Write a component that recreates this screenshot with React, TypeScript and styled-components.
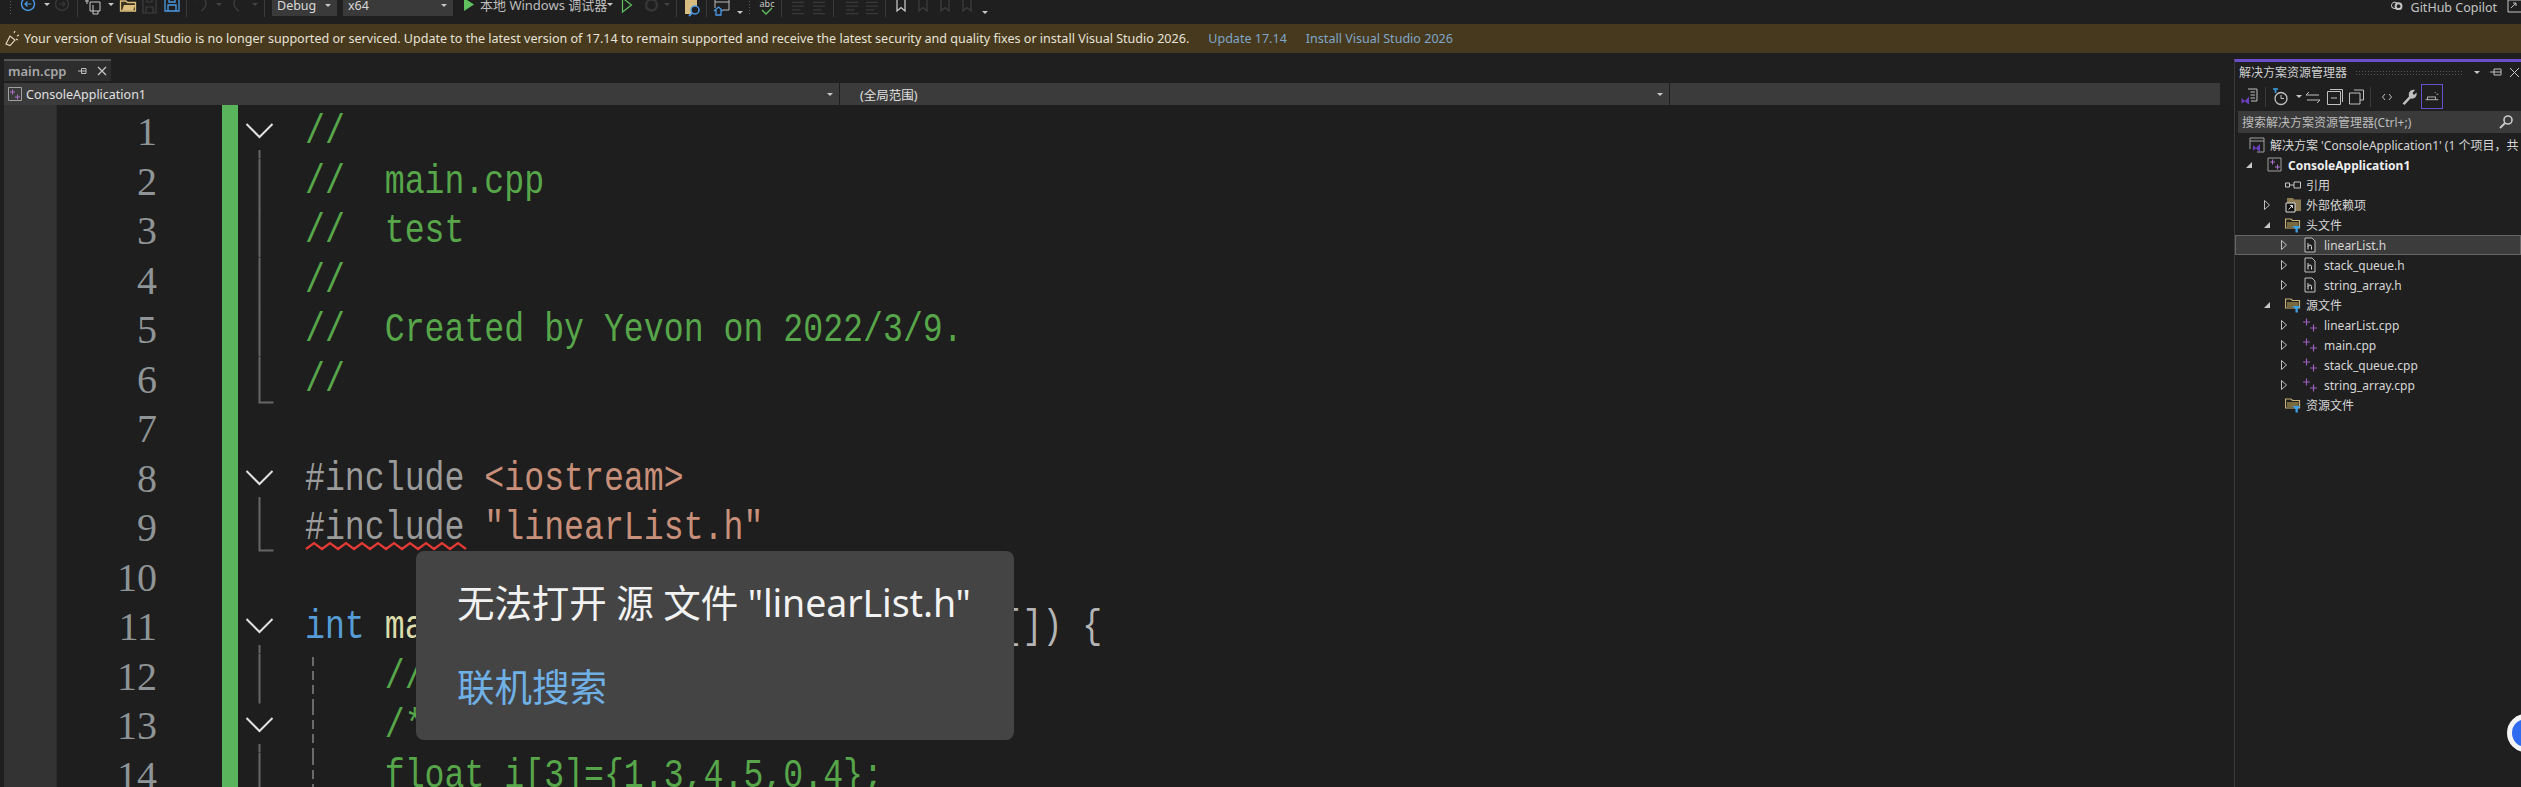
import React from 'react'
import styled, { createGlobalStyle } from 'styled-components'

const GlobalStyle = createGlobalStyle`
  html, body { margin: 0; padding: 0; background: #1f1f1f; overflow: hidden; }
  #root { width: 2521px; height: 787px; }
`

const UI_FONT = `"Noto Sans", "Noto Sans CJK SC", sans-serif`

const tokenColors = {
  comment: '#57a64a',
  pre: '#9b9b9b',
  str: '#c8907a',
  key: '#569cd6',
  fn: '#dcdcaa',
  punct: '#b4b4b4',
  id: '#9cdcfe',
}

const Page = styled.div`
  position: relative;
  width: 2521px;
  height: 787px;
  overflow: hidden;
  display: flex;
  flex-direction: column;
  background: #1f1f1f;
  color: #dcdcdc;
  font-family: ${UI_FONT};
`

/* ---------- top toolbar ---------- */
const Toolbar = styled.div`
  height: 24px;
  flex: none;
  display: flex;
  align-items: flex-start;
  overflow: hidden;
`
const ToolIcon = styled.svg<{ $w?: number; $gap?: number }>`
  flex: none;
  width: ${p => p.$w ?? 16}px;
  height: 18px;
  margin-left: ${p => p.$gap ?? 0}px;
  overflow: visible;
`
const Sep = styled.div<{ $gap: number }>`
  flex: none;
  width: 1px;
  height: 17px;
  background: #3a3a3a;
  margin-left: ${p => p.$gap}px;
`
const Dots = styled.div<{ $gap: number }>`
  flex: none;
  width: 4px;
  height: 15px;
  margin-left: ${p => p.$gap}px;
  background-image: radial-gradient(#5c5c5c 0.7px, transparent 0.8px);
  background-size: 3px 3px;
`
const Combo = styled.div<{ $w: number; $gap: number }>`
  flex: none;
  width: ${p => p.$w}px;
  height: 16px;
  margin-left: ${p => p.$gap}px;
  background: #3a3a3a;
  display: flex;
  align-items: flex-start;
  justify-content: space-between;
  box-sizing: border-box;
  padding: 0 6px 0 5px;
  font-size: 12.5px;
  line-height: 11px;
  color: #d8d8d8;
`
const Arrow = styled.span<{ $gap?: number; $top?: number; $dim?: boolean }>`
  flex: none;
  width: 0;
  height: 0;
  margin-left: ${p => p.$gap ?? 0}px;
  margin-top: ${p => p.$top ?? 0}px;
  border-left: 3px solid transparent;
  border-right: 3px solid transparent;
  border-top: 3px solid ${p => (p.$dim ? '#444' : '#c8c8c8')};
`
const RunLabel = styled.span`
  flex: none;
  width: 124px;
  margin-left: 5px;
  font-size: 13px;
  line-height: 10px;
  color: #bdbdbd;
  white-space: nowrap;
`
const SpellBox = styled.div`
  flex: none;
  width: 18px;
  margin-left: 6px;
  display: flex;
  flex-direction: column;
  align-items: center;
  font-size: 9px;
  line-height: 7px;
  color: #c8c8c8;
`
const CopilotBox = styled.div`
  margin-left: auto;
  margin-right: -2px;
  display: flex;
  align-items: center;
  font-size: 12.5px;
  line-height: 11px;
  color: #c4c4c4;
`
const CopilotLabel = styled.span`
  margin: 0 10px 0 6px;
`

/* ---------- info bar ---------- */
const InfoBar = styled.div`
  height: 29px;
  flex: none;
  background: #47391d;
  display: flex;
  align-items: center;
  padding-left: 4px;
  font-size: 12.55px;
  color: #e6e2d8;
  white-space: nowrap;
`
const InfoText = styled.span`
  margin-left: 4px;
`
const InfoLink = styled.span`
  margin-left: 19px;
  color: #7fa6c9;
`

/* ---------- editor ---------- */
const Body = styled.div`
  flex: 1;
  min-height: 0;
  display: flex;
`
const EditorPane = styled.div`
  flex: none;
  width: 2234px;
  display: flex;
  flex-direction: column;
  padding-top: 6px;
  box-sizing: border-box;
`
const TabStrip = styled.div`
  height: 24px;
  flex: none;
  padding-left: 4px;
  display: flex;
`
const Tab = styled.div`
  width: 107px;
  height: 22px;
  box-sizing: border-box;
  background: #2d2d2d;
  border-top: 2px solid #555;
  display: flex;
  align-items: center;
  padding-left: 4px;
  font-size: 13px;
  font-weight: 600;
  color: #a8a8a8;
`
const TabIcons = styled.span`
  margin-left: 12px;
  display: flex;
  align-items: center;
  gap: 9px;
`
const NavBar = styled.div`
  height: 22px;
  flex: none;
  margin: 0 13px 0 4px;
  background: #3b3b3b;
  display: flex;
  font-size: 12.5px;
  color: #e0e0e0;
`
const NavCell = styled.div<{ $w: number; $pad?: number }>`
  flex: none;
  width: ${p => p.$w}px;
  box-sizing: border-box;
  padding: 0 6px 0 ${p => p.$pad ?? 4}px;
  display: flex;
  align-items: center;
  border-right: 1px solid #1f1f1f;
  gap: 3px;
`
const NavArrow = styled(Arrow)`
  margin-left: auto;
`
const CodeArea = styled.div`
  flex: 1;
  min-height: 0;
  background: #1e1e1e;
  display: flex;
  padding-left: 4px;
  overflow: hidden;
`
const LeftMargin = styled.div`
  flex: none;
  width: 53px;
  background: #333;
  border-right: 1px solid #2c2c2c;
  box-sizing: border-box;
`
/* the green change bar runs the full height, also above the first row */
const Lines = styled.div`
  flex: 1;
  padding-top: 4px;
  display: flex;
  flex-direction: column;
  background: linear-gradient(#59b45c, #59b45c) 165px 0 / 16px 100% no-repeat;
`
const Row = styled.div`
  flex: none;
  height: 49.5px;
  display: flex;
`
const LineNo = styled.div`
  flex: none;
  width: 100px;
  margin-right: 81px;
  text-align: right;
  font: 40px/45.5px "Liberation Serif", serif;
  color: #8f9496;
`
const FoldCell = styled.div`
  flex: none;
  width: 68px;
  position: relative;
`
const FoldSvg = styled.svg`
  position: absolute;
  left: 0;
  top: 0;
  width: 68px;
  height: 50px;
  overflow: visible;
`
const CodeCell = styled.div<{ $guide?: boolean }>`
  flex: 1;
  position: relative;
  white-space: pre;
  ${p =>
    p.$guide
      ? `&::before {
    content: '';
    position: absolute;
    left: 6px;
    top: 3px;
    bottom: -3px;
    width: 2px;
    background: repeating-linear-gradient(to bottom, #6a6a6a 0 9px, transparent 9px 14px);
  }`
      : ''}
`
const CodeText = styled.div`
  display: inline-block;
  margin-left: -1px;
  font: 41px/46px "Liberation Mono", monospace;
  transform: scaleX(0.81);
  transform-origin: left center;
`
const Tok = styled.span<{ $k: keyof typeof tokenColors }>`
  color: ${p => tokenColors[p.$k]};
`
const Squiggle = styled.svg`
  position: absolute;
  left: 0;
  top: 37px;
  width: 158px;
  height: 9px;
  overflow: visible;
`

/* ---------- popup ---------- */
const Popup = styled.div`
  position: absolute;
  left: 416px;
  top: 551px;
  width: 598px;
  height: 189px;
  box-sizing: border-box;
  padding: 30px 0 0 41px;
  background: #444444;
  border-radius: 8px;
`
const PopupTitle = styled.div`
  font-size: 37.5px;
  line-height: 44px;
  letter-spacing: -0.1px;
  color: #f2f2f2;
  white-space: nowrap;
`
const PopupLink = styled.div`
  margin-top: 40px;
  font-size: 37.5px;
  line-height: 44px;
  color: #6fb0e6;
`
const FloatBall = styled.div`
  position: absolute;
  left: 2507px;
  top: 714px;
  width: 38px;
  height: 38px;
  border-radius: 50%;
  background: #2f6bf0;
  border: 5px solid #f4f4f4;
  box-sizing: border-box;
`

/* ---------- solution explorer ---------- */
const Explorer = styled.div`
  flex: 1;
  margin-top: 6px;
  border-left: 1px solid #3a3a3a;
  border-top: 3px solid #6a50c8;
  display: flex;
  flex-direction: column;
  min-width: 0;
`
const PanelTitle = styled.div`
  height: 20px;
  flex: none;
  display: flex;
  align-items: center;
  padding: 0 2px 0 4px;
  font-size: 12px;
  color: #d0d0d0;
  white-space: nowrap;
`
const Grip = styled.div`
  flex: 1;
  height: 5px;
  margin: 0 12px 0 8px;
  background-image: radial-gradient(#5a5a5a 0.7px, transparent 0.8px);
  background-size: 3px 3px;
`
const PanelTools = styled.div`
  height: 29px;
  flex: none;
  display: flex;
  align-items: center;
`
const PanelSep = styled(Sep)`
  height: 20px;
`
const ActiveTool = styled.svg`
  flex: none;
  width: 22px;
  height: 25px;
  margin-left: 4px;
  box-sizing: border-box;
  border: 1px solid #6a50c8;
`
const SearchBox = styled.div`
  height: 22px;
  flex: none;
  margin-left: 3px;
  background: #3a3a3a;
  display: flex;
  align-items: center;
  padding-left: 4px;
  font-size: 12px;
  color: #bdbdbd;
  white-space: nowrap;
  justify-content: space-between;
  overflow: hidden;
`
const Tree = styled.div`
  margin-top: 2px;
  display: flex;
  flex-direction: column;
`
const TreeRow = styled.div<{ $pad: number; $selected?: boolean; $bold?: boolean }>`
  height: 20px;
  flex: none;
  box-sizing: border-box;
  display: flex;
  align-items: center;
  padding-left: ${p => p.$pad}px;
  font-size: 12px;
  font-weight: ${p => (p.$bold ? 700 : 400)};
  color: ${p => (p.$bold ? '#efefef' : '#d6d6d6')};
  white-space: nowrap;
  overflow: hidden;
  ${p => (p.$selected ? 'background: #3c3c3c; box-shadow: inset 0 0 0 1px #666;' : '')}
`
const Twisty = styled.svg`
  flex: none;
  width: 10px;
  height: 10px;
  margin-right: 13px;
`
const NodeIcon = styled.svg`
  flex: none;
  width: 16px;
  height: 16px;
  margin-right: 5px;
`

type TokenDef = [keyof typeof tokenColors, string]
type CodeLine = {
  n: number
  fold?: 'open' | 'line' | 'end'
  guide?: boolean
  squiggle?: boolean
  toks: TokenDef[]
}

const CODE: CodeLine[] = [
  { n: 1, fold: 'open', toks: [['comment', '//']] },
  { n: 2, fold: 'line', toks: [['comment', '//  main.cpp']] },
  { n: 3, fold: 'line', toks: [['comment', '//  test']] },
  { n: 4, fold: 'line', toks: [['comment', '//']] },
  { n: 5, fold: 'line', toks: [['comment', '//  Created by Yevon on 2022/3/9.']] },
  { n: 6, fold: 'end', toks: [['comment', '//']] },
  { n: 7, toks: [] },
  { n: 8, fold: 'open', toks: [['pre', '#include '], ['str', '<iostream>']] },
  { n: 9, fold: 'end', squiggle: true, toks: [['pre', '#include '], ['str', '"linearList.h"']] },
  { n: 10, toks: [] },
  {
    n: 11,
    fold: 'open',
    toks: [
      ['key', 'int '],
      ['fn', 'main'],
      ['punct', '('],
      ['key', 'int '],
      ['id', 'argc'],
      ['punct', ', '],
      ['key', 'const char'],
      ['punct', '* '],
      ['id', 'argv'],
      ['punct', '[]) {'],
    ],
  },
  { n: 12, fold: 'line', guide: true, toks: [['comment', '    //']] },
  { n: 13, fold: 'open', guide: true, toks: [['comment', '    /*']] },
  { n: 14, fold: 'line', guide: true, toks: [['comment', '    float i[3]={1.3,4.5,0.4};']] },
]

function Fold({ kind }: { kind?: CodeLine['fold'] }) {
  return (
    <FoldCell>
      <FoldSvg viewBox="0 0 68 50">
        {kind === 'open' && (
          <>
            <path d="M8.5 15 L21.5 28 L34.5 15" fill="none" stroke="#e2e2e2" strokeWidth="2" />
            <path d="M21.5 41 V49.5" stroke="#666" strokeWidth="2" />
          </>
        )}
        {kind === 'line' && <path d="M21.5 0 V49.5" stroke="#666" strokeWidth="2" />}
        {kind === 'end' && <path d="M21.5 0 V45.5 H35.5" fill="none" stroke="#666" strokeWidth="2" />}
      </FoldSvg>
    </FoldCell>
  )
}

function wavePath() {
  let d = 'M0 7'
  for (let x = 0; x < 157; x += 16) d += ` L${x + 8} 1 L${x + 16} 7`
  return d
}

const ChevronRight = () => (
  <Twisty viewBox="0 0 10 10">
    <path d="M2.5 0.5 L7.5 5 L2.5 9.5 Z" fill="none" stroke="#c0c0c0" strokeWidth="1" />
  </Twisty>
)
const ChevronOpen = () => (
  <Twisty viewBox="0 0 10 10">
    <path d="M8 2 V8 H2 Z" fill="#c8c8c8" />
  </Twisty>
)
const FolderIcon = () => (
  <NodeIcon viewBox="0 0 16 16">
    <path d="M0.5 2 H6 L7.5 3.5 H14.5 V11 H0.5 Z" fill="none" stroke="#c8b078" strokeWidth="1.2" />
    <path d="M2 5 H13.5 V10 H2 Z" fill="#7a6a42" />
    <path d="M7.5 9 H15.5 L12.8 12 V15.5 H10.5 V12 Z" fill="#3aa0e8" />
  </NodeIcon>
)
const HeaderIcon = () => (
  <NodeIcon viewBox="0 0 16 16" style={{ marginRight: 6 }}>
    <path d="M3 1 H10 L13 4 V15 H3 Z" fill="#1f1f1f" stroke="#c0c0c0" />
    <path d="M6 6 V12.5 M6 9.5 Q6.5 8 8 8 Q9.5 8 9.5 9.5 V12.5" fill="none" stroke="#dcdcdc" />
  </NodeIcon>
)
const CppIcon = () => (
  <NodeIcon viewBox="0 0 16 16" style={{ marginRight: 6 }}>
    <path d="M1 5 H8 M4.5 1.5 V8.5 M8 11 H15 M11.5 7.5 V14.5" stroke="#9d5cc0" strokeWidth="1.2" />
  </NodeIcon>
)

type TreeItem = {
  label: string
  pad: number
  twisty?: 'open' | 'closed'
  icon: 'folder' | 'h' | 'cpp' | 'ref' | 'ext'
  selected?: boolean
}

const TREE: TreeItem[] = [
  { label: '引用', pad: 50, icon: 'ref' },
  { label: '外部依赖项', pad: 27, twisty: 'closed', icon: 'ext' },
  { label: '头文件', pad: 27, twisty: 'open', icon: 'folder' },
  { label: 'linearList.h', pad: 44, twisty: 'closed', icon: 'h', selected: true },
  { label: 'stack_queue.h', pad: 44, twisty: 'closed', icon: 'h' },
  { label: 'string_array.h', pad: 44, twisty: 'closed', icon: 'h' },
  { label: '源文件', pad: 27, twisty: 'open', icon: 'folder' },
  { label: 'linearList.cpp', pad: 44, twisty: 'closed', icon: 'cpp' },
  { label: 'main.cpp', pad: 44, twisty: 'closed', icon: 'cpp' },
  { label: 'stack_queue.cpp', pad: 44, twisty: 'closed', icon: 'cpp' },
  { label: 'string_array.cpp', pad: 44, twisty: 'closed', icon: 'cpp' },
  { label: '资源文件', pad: 50, icon: 'folder' },
]

function NodeGlyph({ icon }: { icon: TreeItem['icon'] }) {
  if (icon === 'folder') return <FolderIcon />
  if (icon === 'h') return <HeaderIcon />
  if (icon === 'cpp') return <CppIcon />
  if (icon === 'ref')
    return (
      <NodeIcon viewBox="0 0 16 16">
        <path d="M0.5 6 H4.5 V10 H0.5 Z M4.5 8 H9 M9 5 H15.5 V11 H9 Z" fill="none" stroke="#c8c8c8" />
      </NodeIcon>
    )
  return (
    <NodeIcon viewBox="0 0 16 16">
      <path d="M2 1 H8 L9 2.5 H16 V14 H2 Z" fill="#8a7a52" />
      <path d="M1 6 H10 V15 H1 Z" fill="#111" stroke="#ddd" />
      <path d="M3.5 12.5 L7.5 8.5 M5 8.5 H7.5 V11" fill="none" stroke="#ddd" />
    </NodeIcon>
  )
}

const DimBars = ({ gap }: { gap: number }) => (
  <ToolIcon viewBox="0 0 16 18" $w={15} $gap={gap}>
    <path d="M1 2 H14 M1 6 H14 M1 10 H10 M1 14 H14" stroke="#3a3a3a" strokeWidth="1.3" />
  </ToolIcon>
)
const Bookmark = ({ gap, bright }: { gap: number; bright?: boolean }) => (
  <ToolIcon viewBox="0 0 10 18" $w={10} $gap={gap}>
    <path d="M1 -2 V11 L5 7.5 L9 11 V-2" fill="none" stroke={bright ? '#d0d0d0' : '#3f3f3f'} strokeWidth="1.2" />
  </ToolIcon>
)

function TopToolbar() {
  return (
    <Toolbar>
      <Dots $gap={9} />
      <ToolIcon viewBox="0 0 16 18" $gap={7}>
        <circle cx="8" cy="4" r="6.5" fill="none" stroke="#4a9be8" strokeWidth="1.4" />
        <path d="M11.5 4 H5 M7.5 1.5 L5 4 L7.5 6.5" fill="none" stroke="#4a9be8" strokeWidth="1.2" />
      </ToolIcon>
      <Arrow $gap={8} $top={3} />
      <ToolIcon viewBox="0 0 16 18" $gap={4}>
        <circle cx="8" cy="4" r="6.5" fill="none" stroke="#383838" strokeWidth="1.4" />
        <path d="M4.5 4 H11 M8.5 1.5 L11 4 L8.5 6.5" fill="none" stroke="#383838" strokeWidth="1.2" />
      </ToolIcon>
      <Sep $gap={7} />
      <ToolIcon viewBox="0 0 16 18" $gap={8}>
        <path d="M4 2 H14 V11 H4 Z M7 5 V14 H12 V11 M1 -1 V4 M-1 1 H3" fill="none" stroke="#c8c8c8" />
      </ToolIcon>
      <Arrow $gap={6} $top={3} />
      <ToolIcon viewBox="0 0 16 18" $gap={6}>
        <path d="M0.5 1 H6 L7.5 2.5 H15.5 V11 H0.5 Z" fill="#3a3220" stroke="#dcc07e" strokeWidth="1.3" />
        <path d="M2 10.5 L4 5 H15.5 L13 10.5 Z" fill="#dcc07e" />
      </ToolIcon>
      <ToolIcon viewBox="0 0 16 18" $gap={6}>
        <path d="M1 -2 H14 V13 H1 Z M4 7 H11 V13 H4 Z M5 -2 H10 V2 H5 Z" fill="none" stroke="#3f3f3f" strokeWidth="1.2" />
      </ToolIcon>
      <ToolIcon viewBox="0 0 16 18" $gap={6}>
        <path d="M1 -2 H15 V11 H1 Z M4 5 H12 V11 H4 Z M5 -2 H11 V2 H5 Z" fill="none" stroke="#4a9be8" strokeWidth="1.3" />
      </ToolIcon>
      <Sep $gap={6} />
      <ToolIcon viewBox="0 0 14 18" $w={14} $gap={8}>
        <path d="M1 0 L7 -2 C13 0 12 7 6 11" fill="none" stroke="#3f3f3f" strokeWidth="1.3" />
      </ToolIcon>
      <Arrow $gap={7} $top={3} $dim />
      <ToolIcon viewBox="0 0 16 18" $gap={8}>
        <path d="M13 0 L8 -2 C2 0 3 7 9 11" fill="none" stroke="#3f3f3f" strokeWidth="1.3" />
      </ToolIcon>
      <Arrow $gap={6} $top={3} $dim />
      <Sep $gap={6} />
      <Combo $w={65} $gap={7}>
        Debug
        <Arrow $top={4} />
      </Combo>
      <Combo $w={110} $gap={6}>
        x64
        <Arrow $top={4} />
      </Combo>
      <ToolIcon viewBox="0 0 12 18" $w={12} $gap={10}>
        <path d="M1 -2 L11 4.5 L1 11 Z" fill="#5fc25f" />
      </ToolIcon>
      <RunLabel>本地 Windows 调试器</RunLabel>
      <Arrow $gap={3} $top={3} />
      <ToolIcon viewBox="0 0 12 18" $w={12} $gap={8}>
        <path d="M1.5 -2 L10.5 5 L1.5 12 Z" fill="none" stroke="#5fc25f" strokeWidth="1.2" />
      </ToolIcon>
      <ToolIcon viewBox="0 0 15 18" $w={15} $gap={11}>
        <circle cx="7.5" cy="5" r="5.5" fill="none" stroke="#363636" strokeWidth="2.4" />
      </ToolIcon>
      <Arrow $gap={5} $top={3} $dim />
      <Sep $gap={6} />
      <ToolIcon viewBox="0 0 17 18" $w={17} $gap={7}>
        <path d="M1 -2 H13 V14 H1 Z" fill="#d8bd80" />
        <circle cx="11" cy="10" r="4" fill="#1f1f1f" stroke="#4a9be8" strokeWidth="1.5" />
        <path d="M8 13 L5 16" stroke="#4a9be8" strokeWidth="1.8" />
      </ToolIcon>
      <Sep $gap={5} />
      <ToolIcon viewBox="0 0 17 18" $w={17} $gap={7}>
        <path d="M1 -2 H15 V10 H9 M1 -2 V8 M1 2 H15" fill="none" stroke="#bdbdbd" />
        <path d="M0 11 L4.5 7 L9 11 M2 10 V15 H7 V10" fill="none" stroke="#4a9be8" strokeWidth="1.3" />
      </ToolIcon>
      <Arrow $gap={6} $top={11} />
      <Dots $gap={5} />
      <SpellBox>
        abc
        <svg width="12" height="8" viewBox="0 0 12 8">
          <path d="M1 3 L5 7 L11 1" fill="none" stroke="#5fc25f" strokeWidth="1.3" />
        </svg>
      </SpellBox>
      <Sep $gap={5} />
      <DimBars gap={9} />
      <DimBars gap={6} />
      <Sep $gap={6} />
      <DimBars gap={11} />
      <DimBars gap={5} />
      <Sep $gap={5} />
      <Bookmark gap={10} bright />
      <Bookmark gap={12} />
      <Bookmark gap={12} />
      <Bookmark gap={12} />
      <Arrow $gap={10} $top={11} />
      <CopilotBox>
        <ToolIcon viewBox="0 0 16 18" style={{ height: 14 }}>
          <circle cx="5" cy="7" r="4" fill="none" stroke="#c4c4c4" strokeWidth="1.3" />
          <circle cx="10" cy="8" r="5" fill="#c4c4c4" />
          <circle cx="10" cy="8" r="2.4" fill="#1f1f1f" />
        </ToolIcon>
        <CopilotLabel>GitHub Copilot</CopilotLabel>
        <ToolIcon viewBox="0 0 16 14" style={{ height: 14 }}>
          <path d="M1 0 H15 V12 H1 Z M4 8 L9 3 M6 3 H9 V6" fill="none" stroke="#c4c4c4" />
        </ToolIcon>
      </CopilotBox>
    </Toolbar>
  )
}

function ExplorerTools() {
  return (
    <PanelTools>
      <ToolIcon viewBox="0 0 17 18" $w={17} $gap={6}>
        <path d="M7 1 H16 V13 H10 M9.5 4 H14 M9.5 7 H14 M9.5 10 H14" fill="none" stroke="#c0c0c0" />
        <path d="M0.5 10 L4 13 L8 8.5 V16.5 L4 13.5 L0.5 15.5 Z" fill="#6a3fc0" />
      </ToolIcon>
      <PanelSep $gap={7} />
      <ToolIcon viewBox="0 0 16 18" $gap={7}>
        <path d="M0 1 H5 M2.5 1 V5" stroke="#3aa0e8" strokeWidth="1.6" />
        <circle cx="8" cy="10.5" r="6" fill="none" stroke="#c0c0c0" strokeWidth="1.3" />
        <path d="M8 7 V10.5 H11" fill="none" stroke="#c0c0c0" />
      </ToolIcon>
      <Arrow $gap={7} />
      <ToolIcon viewBox="0 0 14 18" $w={14} $gap={4}>
        <path d="M0 7 H13 M3 4 L0 7 M14 12 H1 M11 15 L14 12" fill="none" stroke="#c0c0c0" />
      </ToolIcon>
      <ToolIcon viewBox="0 0 16 18" $gap={7}>
        <path d="M3 1.5 H15.5 V14 M0.5 3.5 H13.5 V16.5 H0.5 Z M4 10 H10" fill="none" stroke="#c0c0c0" />
      </ToolIcon>
      <ToolIcon viewBox="0 0 15 18" $w={15} $gap={6}>
        <path d="M5 2 H14.5 V12 H11 M0.5 5 H11 V16 H0.5 Z" fill="none" stroke="#c0c0c0" />
      </ToolIcon>
      <PanelSep $gap={6} />
      <ToolIcon viewBox="0 0 10 18" $w={10} $gap={11}>
        <path d="M3 6 L0.5 9 L3 12 M7 6 L9.5 9 L7 12" fill="none" stroke="#c0c0c0" />
      </ToolIcon>
      <ToolIcon viewBox="0 0 15 18" $w={15} $gap={10}>
        <path d="M0.5 15.5 L7 8.5 C6 4 9 1 13 2 L10.5 5 L12 7 L14.5 4.5 C15.5 8.5 12 11.5 8.5 10.5 L2.5 17 Z" fill="#c0c0c0" />
      </ToolIcon>
      <ActiveTool viewBox="0 0 22 25">
        <path d="M4 16 H18 M6 16 V13 H15 V16 M16 10 H18 M14 8 H15" fill="none" stroke="#c0c0c0" />
      </ActiveTool>
    </PanelTools>
  )
}

export default function App() {
  return (
    <Page>
      <GlobalStyle />
      <TopToolbar />

      <InfoBar>
        <svg width="16" height="18" viewBox="0 0 16 18">
          <path d="M2 14 L6 6 L11 10 L6 15.5 Z M10 3 L11 1 M13 6 L15 5 M12 9 L14 10" fill="none" stroke="#e8e0cc" strokeWidth="1.1" />
        </svg>
        <InfoText>
          Your version of Visual Studio is no longer supported or serviced. Update to the latest version of 17.14 to remain supported and receive the latest security and quality fixes or install Visual Studio 2026.
        </InfoText>
        <InfoLink>Update 17.14</InfoLink>
        <InfoLink>Install Visual Studio 2026</InfoLink>
      </InfoBar>

      <Body>
        <EditorPane>
          <TabStrip>
            <Tab>
              main.cpp
              <TabIcons>
                <svg width="10" height="10" viewBox="0 0 10 10">
                  <path d="M0 5 H3 M3.5 2.5 H8 V7.5 H3.5 Z M3.5 5 H8" fill="none" stroke="#c0c0c0" />
                </svg>
                <svg width="10" height="10" viewBox="0 0 10 10">
                  <path d="M1 1 L9 9 M9 1 L1 9" stroke="#c8c8c8" strokeWidth="1.2" />
                </svg>
              </TabIcons>
            </Tab>
          </TabStrip>
          <NavBar>
            <NavCell $w={836} $pad={4}>
              <svg width="15" height="15" viewBox="0 0 15 15">
                <path d="M0.5 0.5 H13.5 V13.5 H0.5 Z" fill="none" stroke="#a0a0a0" />
                <path d="M2 5 H7 M4.5 2.5 V7.5 M7 10 H12 M9.5 7.5 V12.5" stroke="#b070d0" />
              </svg>
              ConsoleApplication1
              <NavArrow />
            </NavCell>
            <NavCell $w={830} $pad={20}>
              (全局范围)
              <NavArrow />
            </NavCell>
            <NavCell $w={551} />
          </NavBar>
          <CodeArea>
            <LeftMargin />
            <Lines>
              {CODE.map(line => (
                <Row key={line.n}>
                  <LineNo>{line.n}</LineNo>
                  <Fold kind={line.fold} />
                  <CodeCell $guide={line.guide}>
                    <CodeText>
                      {line.toks.map((t, i) => (
                        <Tok key={i} $k={t[0]}>
                          {t[1]}
                        </Tok>
                      ))}
                    </CodeText>
                    {line.squiggle && (
                      <Squiggle viewBox="0 0 158 9">
                        <path d={wavePath()} fill="none" stroke="#e53935" strokeWidth="2.2" />
                      </Squiggle>
                    )}
                  </CodeCell>
                </Row>
              ))}
            </Lines>
          </CodeArea>
        </EditorPane>
        <Explorer>
          <PanelTitle>
            解决方案资源管理器
            <Grip />
            <Arrow style={{ marginRight: 10 }} />
            <svg width="12" height="10" viewBox="0 0 12 10" style={{ marginRight: 8 }}>
              <path d="M0 5 H4 M4 2 H11 V8 H4 Z M4 5 H11" fill="none" stroke="#c0c0c0" />
            </svg>
            <svg width="9" height="9" viewBox="0 0 9 9">
              <path d="M0 0 L9 9 M9 0 L0 9" stroke="#c8c8c8" />
            </svg>
          </PanelTitle>
          <ExplorerTools />
          <SearchBox>
            搜索解决方案资源管理器(Ctrl+;)
            <svg width="16" height="16" viewBox="0 0 16 16" style={{ marginRight: 7 }}>
              <circle cx="10" cy="6" r="4" fill="none" stroke="#c8c8c8" strokeWidth="1.6" />
              <path d="M7 9 L2 14" stroke="#c8c8c8" strokeWidth="2" />
            </svg>
          </SearchBox>
          <Tree>
            <TreeRow $pad={14}>
              <NodeIcon viewBox="0 0 16 16">
                <path d="M1 1 H15 V15 H8 M1 1 V12 M1 4 H15" fill="none" stroke="#a0a0a0" />
                <path d="M4 8 L7 11 L11 7 V15 L7 11.5 L4 13.5 Z" fill="#6a3fc0" />
              </NodeIcon>
              解决方案 'ConsoleApplication1' (1 个项目，共 1 个)
            </TreeRow>
            <TreeRow $pad={9} $bold>
              <ChevronOpen />
              <NodeIcon viewBox="0 0 16 16">
                <path d="M1 1 H14 V14 H1 Z" fill="none" stroke="#a0a0a0" />
                <path d="M3 5 H8 M5.5 2.5 V7.5 M8 10 H13 M10.5 7.5 V12.5" stroke="#b070d0" />
              </NodeIcon>
              ConsoleApplication1
            </TreeRow>
            {TREE.map(item => (
              <TreeRow key={item.label} $pad={item.pad} $selected={item.selected}>
                {item.twisty === 'open' && <ChevronOpen />}
                {item.twisty === 'closed' && <ChevronRight />}
                <NodeGlyph icon={item.icon} />
                {item.label}
              </TreeRow>
            ))}
          </Tree>
        </Explorer>
      </Body>

      <Popup>
        <PopupTitle>无法打开 源 文件 "linearList.h"</PopupTitle>
        <PopupLink>联机搜索</PopupLink>
      </Popup>
      <FloatBall />
    </Page>
  )
}
